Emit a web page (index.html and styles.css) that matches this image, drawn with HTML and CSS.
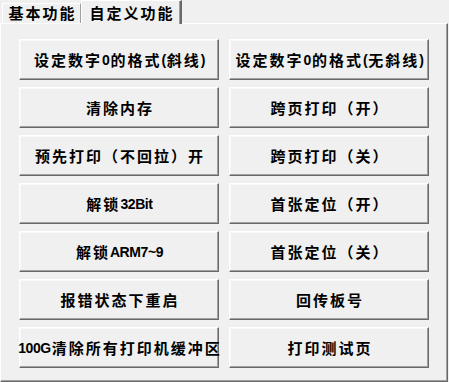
FILE: index.html
```html
<!DOCTYPE html>
<html lang="zh-CN">
<head>
<meta charset="utf-8">
<title>自定义功能</title>
<link rel="stylesheet" href="styles.css">
</head>
<body>
<div class="window">
  <div class="tabs">
    <div class="tab">基本功能</div>
    <div class="tab active">自定义功能</div>
  </div>
  <div class="panel">
    <div class="grid">
      <div class="btn">设定数字<span class="en">0</span>的格式<span class="en">(</span>斜线<span class="en">)</span></div>
      <div class="btn">设定数字<span class="en">0</span>的格式<span class="en">(</span>无斜线<span class="en">)</span></div>
      <div class="btn">清除内存</div>
      <div class="btn">跨页打印（开）</div>
      <div class="btn">预先打印（不回拉）开</div>
      <div class="btn">跨页打印（关）</div>
      <div class="btn">解锁<span class="en">32Bit</span></div>
      <div class="btn">首张定位（开）</div>
      <div class="btn">解锁<span class="en">ARM7~9</span></div>
      <div class="btn">首张定位（关）</div>
      <div class="btn">报错状态下重启</div>
      <div class="btn">回传板号</div>
      <div class="btn"><span class="en">100G</span>清除所有打印机缓冲区</div>
      <div class="btn">打印测试页</div>
    </div>
  </div>
</div>
</body>
</html>
```

FILE: styles.css
```css
html, body {
  margin: 0;
  padding: 0;
  background: #f0f0f0;
}

body {
  width: 449px;
  height: 382px;
  overflow: hidden;
  font-family: "Liberation Sans", "Noto Sans CJK SC", sans-serif;
  font-weight: 700;
  color: #000;
}

.window {
  display: flex;
  flex-direction: column;
}

.tabs {
  display: flex;
  align-items: flex-end;
  padding-left: 2px;
  height: 23px;
}

.tab {
  box-sizing: border-box;
  height: 20px;
  width: 79px;
  border-top: 1px solid #ffffff;
  border-left: 1px solid #ffffff;
  border-right: 1px solid #a0a0a0;
  font-size: 15px;
  line-height: 19px;
  letter-spacing: 2px;
  padding-left: 2px;
  text-align: center;
  white-space: nowrap;
  background: #f0f0f0;
}

.tab.active {
  position: relative;
  z-index: 1;
  width: 101px;
  height: 24px;
  margin-bottom: -1px;
  padding-top: 3px;
  border-right: 2px solid #696969;
  box-shadow: inset -1px 0 0 #a0a0a0;
}

.panel {
  box-sizing: border-box;
  width: 448px;
  height: 359px;
  border-top: 1px solid #ffffff;
  border-left: 1px solid #ffffff;
  border-right: 1px solid #696969;
  border-bottom: 1px solid #696969;
  box-shadow: inset -1px -1px 0 #a0a0a0;
  padding: 15px 0 0 18px;
}

.grid {
  display: grid;
  grid-template-columns: 200px 200px;
  grid-auto-rows: 41px;
  column-gap: 10px;
  row-gap: 7px;
}

.btn {
  box-sizing: border-box;
  display: flex;
  align-items: center;
  justify-content: center;
  border-top: 1px solid #ffffff;
  border-left: 1px solid #ffffff;
  border-right: 1px solid #696969;
  border-bottom: 1px solid #696969;
  box-shadow: inset -1px -1px 0 #a0a0a0, inset 1px 1px 0 #f8f8f8;
  background: #f0f0f0;
  font-size: 15px;
  letter-spacing: 2px;
  padding-left: 2px;
  white-space: nowrap;
}

.en {
  font-family: "Liberation Sans", sans-serif;
  font-size: 14px;
  letter-spacing: -0.4px;
  margin-right: 1px;
}
```
